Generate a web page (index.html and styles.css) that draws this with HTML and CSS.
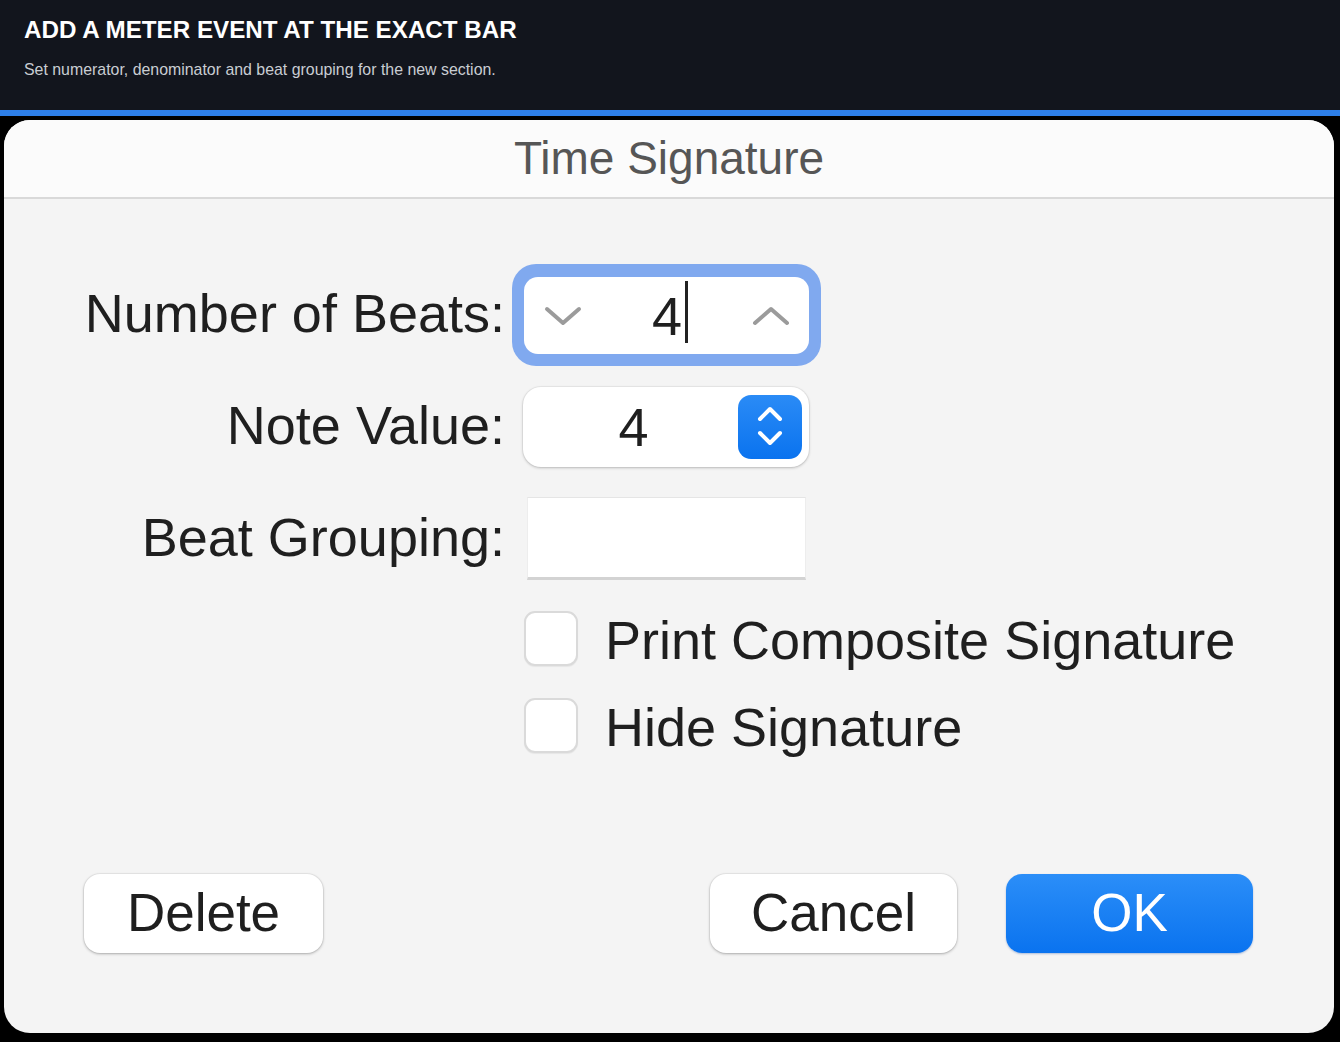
FILE: index.html
```html
<!DOCTYPE html>
<html lang="en">
<head>
<meta charset="utf-8">
<title>Time Signature</title>
<link rel="stylesheet" href="styles.css">
</head>
<body>
<header class="header">
  <h1 class="header-title">ADD A METER EVENT AT THE EXACT BAR</h1>
  <p class="header-sub">Set numerator, denominator and beat grouping for the new section.</p>
</header>
<div class="accent"></div>
<main class="stage">
  <section class="dialog">
    <div class="titlebar">Time Signature</div>
    <div class="body">
      <div class="row row-beats">
        <div class="label">Number of Beats:</div>
        <div class="ring">
          <div class="numfield">
            <svg class="chev" width="40" height="24" viewBox="0 0 40 24"><path d="M4 5 L20 19 L36 5" fill="none" stroke="#9b9b9b" stroke-width="4" stroke-linecap="round" stroke-linejoin="round"/></svg>
            <span class="num caret">4</span>
            <svg class="chev" width="40" height="24" viewBox="0 0 40 24"><path d="M4 19 L20 5 L36 19" fill="none" stroke="#9b9b9b" stroke-width="4" stroke-linecap="round" stroke-linejoin="round"/></svg>
          </div>
        </div>
      </div>
      <div class="row row-note">
        <div class="label">Note Value:</div>
        <div class="popup">
          <span class="num popup-value">4</span>
          <span class="stepper">
            <svg width="64" height="64" viewBox="0 0 64 64"><path d="M22 24 L32 14 L42 24" fill="none" stroke="#fff" stroke-width="4" stroke-linecap="round" stroke-linejoin="round"/><path d="M22 38 L32 48 L42 38" fill="none" stroke="#fff" stroke-width="4" stroke-linecap="round" stroke-linejoin="round"/></svg>
          </span>
        </div>
      </div>
      <div class="row row-group">
        <div class="label">Beat Grouping:</div>
        <div class="textfield"></div>
      </div>
      <div class="row row-check1">
        <div class="label"></div>
        <label class="check"><span class="box"></span><span class="check-text">Print Composite Signature</span></label>
      </div>
      <div class="row row-check2">
        <div class="label"></div>
        <label class="check"><span class="box"></span><span class="check-text">Hide Signature</span></label>
      </div>
      <div class="footer">
        <button class="btn btn-delete">Delete</button>
        <div class="btn-group">
          <button class="btn btn-cancel">Cancel</button>
          <button class="btn btn-ok">OK</button>
        </div>
      </div>
    </div>
  </section>
</main>
</body>
</html>
```
FILE: styles.css
```css
* { box-sizing: border-box; }
html, body { margin: 0; padding: 0; }
body {
  width: 1340px;
  height: 1042px;
  background: #000;
  font-family: "Liberation Sans", Arial, sans-serif;
  overflow: hidden;
}
.header {
  height: 110px;
  background: #12151d;
  padding: 16px 24px 0;
}
.header-title {
  margin: 0;
  font-size: 24.2px;
  line-height: 28px;
  font-weight: bold;
  color: #fff;
}
.header-sub {
  margin: 16px 0 0;
  font-size: 15.9px;
  line-height: 20px;
  color: #c9cdd3;
}
.accent {
  height: 6px;
  background: #2d7fe8;
}
.stage {
  padding: 4px 6px 9px 4px;
}
.dialog {
  height: 913px;
  background: #f4f4f4;
  border-radius: 26px;
  overflow: hidden;
}
.titlebar {
  height: 79px;
  background: #fbfbfb;
  border-bottom: 2px solid #d9d9d9;
  text-align: center;
  font-size: 46px;
  line-height: 76px;
  color: #565656;
}
.body {
  padding-top: 65px;
}
.row {
  display: flex;
  align-items: center;
}
.label {
  width: 501px;
  flex: none;
  text-align: right;
  font-size: 54px;
  line-height: 1;
  color: #1f1f1f;
  padding-bottom: 4px;
}
.row-beats { height: 102px; }
.row-note { height: 80px; margin-top: 21px; }
.row-group { height: 83px; margin-top: 30px; }
.row-check1 { height: 55px; margin-top: 31px; }
.row-check2 { height: 55px; margin-top: 32px; }

.ring {
  margin-left: 7px;
  width: 309px;
  height: 102px;
  padding: 13px 12px 12px;
  background: #80a9ef;
  border-radius: 24px;
}
.numfield {
  height: 77px;
  background: #fff;
  border-radius: 14px;
  display: flex;
  align-items: center;
  justify-content: space-between;
  padding: 0 18px 0 19px;
}
.chev { display: block; }
.num {
  font-size: 54px;
  line-height: 1;
  color: #1f1f1f;
}
.caret { position: relative; }
.caret::after {
  content: "";
  position: absolute;
  left: calc(100% + 3px);
  top: -8px;
  width: 3px;
  height: 62px;
  background: #222;
}
.popup {
  margin-left: 18px;
  width: 286px;
  height: 80px;
  background: #fff;
  border-radius: 18px;
  box-shadow: 0 1px 3px rgba(0, 0, 0, 0.22), 0 0 0 1px rgba(0, 0, 0, 0.04);
  display: flex;
  align-items: center;
  padding: 0 7px 0 0;
}
.popup-value {
  flex: 1;
  text-align: center;
  padding-left: 6px;
}
.stepper {
  width: 64px;
  height: 64px;
  border-radius: 13px;
  background: linear-gradient(#2a8bf6, #0a73ef);
  display: flex;
  align-items: center;
  justify-content: center;
}
.stepper svg { display: block; }
.textfield {
  margin-left: 22px;
  width: 279px;
  height: 83px;
  background: #fff;
  border-top: 1px solid #e5e5e5;
  border-left: 1px solid #ededed;
  border-right: 1px solid #ededed;
  border-bottom: 3px solid #d3d3d3;
}
.check {
  margin-left: 19px;
  display: flex;
  align-items: center;
}
.box {
  width: 54px;
  height: 55px;
  border-radius: 11px;
  background: #fff;
  border: 2px solid #dadada;
  box-shadow: 0 1px 1px rgba(0, 0, 0, 0.06);
}
.check-text {
  margin-left: 27px;
  font-size: 54px;
  line-height: 1;
  color: #1f1f1f;
  padding-top: 2px;
}
.footer {
  margin-top: 121px;
  padding: 0 81px 0 80px;
  display: flex;
  justify-content: space-between;
}
.btn-group {
  display: flex;
  gap: 49px;
}
.btn {
  height: 79px;
  border: none;
  border-radius: 16px;
  font-family: "Liberation Sans", Arial, sans-serif;
  font-size: 53px;
  line-height: 1;
  padding: 0 0 2px;
  color: #1f1f1f;
  background: #fff;
  box-shadow: 0 1px 3px rgba(0, 0, 0, 0.28), 0 0 0 1px rgba(0, 0, 0, 0.04);
}
.btn-delete { width: 239px; }
.btn-cancel { width: 247px; }
.btn-ok {
  width: 247px;
  color: #fff;
  background: linear-gradient(#2b8ef8, #0a73ef);
  box-shadow: 0 1px 2px rgba(0, 60, 160, 0.3);
}
```
